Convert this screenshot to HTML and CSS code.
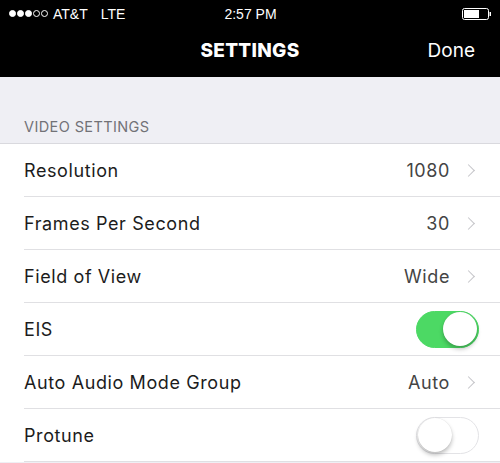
FILE: index.html
```html
<!DOCTYPE html>
<html>
<head>
<meta charset="utf-8">
<link rel="stylesheet" href="styles.css">
</head>
<body>
<header class="topbar">
  <div class="status">
    <div class="status-left">
      <span class="signal"><i class="dot full"></i><i class="dot full"></i><i class="dot full"></i><i class="dot"></i><i class="dot"></i></span>
      <span class="carrier">AT&amp;T</span><span class="net">LTE</span>
    </div>
    <div class="status-time">2:57 PM</div>
    <div class="status-right">
      <svg width="30" height="12" viewBox="0 0 30 12"><rect x="0.5" y="0.5" width="26" height="11" rx="2" fill="none" stroke="#fff" stroke-width="1"/><rect x="2" y="2" width="15" height="8" fill="#fff"/><rect x="27.5" y="4" width="1.5" height="4" fill="#fff"/></svg>
    </div>
  </div>
  <nav class="nav">
    <div class="nav-side"></div>
    <div class="nav-title">SETTINGS</div>
    <div class="nav-side nav-done">Done</div>
  </nav>
</header>
<section class="section-head">VIDEO SETTINGS</section>
<ul class="list">
  <li class="row"><span class="label">Resolution</span><span class="value">1080</span><span class="chev"></span></li>
  <li class="row"><span class="label">Frames Per Second</span><span class="value">30</span><span class="chev"></span></li>
  <li class="row"><span class="label">Field of View</span><span class="value">Wide</span><span class="chev"></span></li>
  <li class="row"><span class="label">EIS</span><span class="toggle on"><span class="knob"></span></span></li>
  <li class="row"><span class="label">Auto Audio Mode Group</span><span class="value">Auto</span><span class="chev"></span></li>
  <li class="row"><span class="label">Protune</span><span class="toggle"><span class="knob"></span></span></li>
</ul>
</body>
</html>
```

FILE: styles.css
```css
* { box-sizing: border-box; }
html, body { margin: 0; padding: 0; }
body {
  width: 500px;
  height: 463px;
  overflow: hidden;
  background: #efeff4;
  font-family: Inter, Lato, "Liberation Sans", sans-serif;
}
.topbar {
  background: #000;
  color: #fff;
  height: 77px;
}
.status {
  height: 27px;
  display: grid;
  grid-template-columns: 1fr auto 1fr;
  align-items: center;
  padding: 0 8px 0 9px;
  font-family: "Liberation Sans", Arial, sans-serif;
  font-size: 14px;
}
.status-left { display: flex; align-items: center; }
.signal { display: flex; gap: 1px; margin-right: 5px; }
.dot {
  width: 7px;
  height: 7px;
  border-radius: 50%;
  border: 1px solid #fff;
}
.dot.full { background: #fff; }
.net { margin-left: 13px; }
.status-time { text-align: center; font-size: 14px; }
.status-right { display: flex; justify-content: flex-end; }
.nav {
  height: 50px;
  display: grid;
  grid-template-columns: 1fr auto 1fr;
  align-items: center;
  padding: 0 25px 4px 25px;
}
.nav-title {
  font-weight: 800;
  font-size: 19px;
  letter-spacing: 0.3px;
}
.nav-done {
  text-align: right;
  font-size: 19px;
}
.section-head {
  height: 67px;
  padding: 41px 0 0 24px;
  color: #727277;
  font-size: 14.5px;
  letter-spacing: 0.4px;
  border-bottom: 1px solid #d9d9de;
}
.list {
  list-style: none;
  margin: 0;
  padding: 0 0 0 24px;
  background: #fff;
}
.row {
  height: 53px;
  display: flex;
  align-items: center;
  padding-right: 25px;
  border-bottom: 1px solid #e0e0e3;
  font-size: 18px;
  letter-spacing: 0.6px;
  color: #1c1c1c;
}
.label { flex: 1; }
.value { color: #444; }
.chev {
  width: 9px;
  height: 9px;
  border-top: 1.7px solid #c4c4c8;
  border-right: 1.7px solid #c4c4c8;
  transform: rotate(45deg);
  margin-left: 14px;
  margin-right: 2px;
}
.toggle {
  width: 63px;
  height: 37px;
  border-radius: 19px;
  border: 1.5px solid #e3e3e6;
  background: #fff;
  display: flex;
  align-items: center;
  padding: 0 1px;
  margin-right: -4px;
}
.toggle.on {
  background: #4cd964;
  border-color: #4cd964;
  justify-content: flex-end;
}
.knob {
  width: 34px;
  height: 34px;
  border-radius: 50%;
  background: #fff;
  box-shadow: 0 3px 4px rgba(0,0,0,0.25), 0 0 1px rgba(0,0,0,0.15);
}
```
